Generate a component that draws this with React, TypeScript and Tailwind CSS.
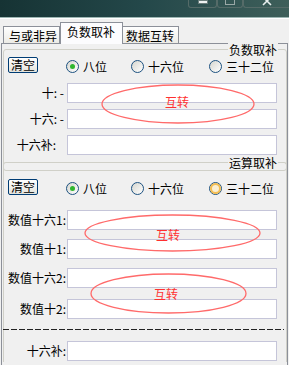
import clsx from "clsx";

const FONT = "font-['SimSun','Noto_Sans_CJK_SC',sans-serif]";

function Radio({ label, checked, hover, w }: { label: string; checked?: boolean; hover?: boolean; w?: string }) {
  return (
    <div className={clsx("flex items-center gap-[4px]", w)}>
      <span className="w-[13px] h-[13px] shrink-0 rounded-full border border-[#1c5180] bg-gradient-to-br from-[#d6d6cf] to-white flex items-center justify-center">
        {checked && <span className="w-[5px] h-[5px] rounded-full bg-[#2fb62f]" />}
        {hover && <span className="w-[11px] h-[11px] rounded-full border-2 border-[#f3bd52] bg-[#fbefd2]" />}
      </span>
      <span>{label}</span>
    </div>
  );
}

function ClearButton() {
  return (
    <button className="w-[30px] h-[16px] rounded-[2px] border border-[#003c74] bg-gradient-to-b from-white to-[#e3e3dc] text-[12px] leading-[14px] text-black">
      清空
    </button>
  );
}

function Field({ label, labelW, pr, gap }: { label: string; labelW: string; pr?: string; gap: string }) {
  return (
    <div className="flex items-center h-[20px]">
      <span className={clsx("text-right whitespace-nowrap", labelW, pr)}>{label}</span>
      <span className={clsx("h-[20px] w-[210px] bg-white border border-[#c5c5d9]", gap)} />
    </div>
  );
}

function Swap({ cx, cy, rx, ry, tx, ty }: { cx: number; cy: number; rx: number; ry: number; tx: number; ty: number }) {
  return (
    <>
      <svg className="absolute left-0 top-0 pointer-events-none" width={289} height={365}>
        <ellipse cx={cx} cy={cy} rx={rx} ry={ry} fill="none" stroke="#ff6a6a" strokeWidth={1.3} />
      </svg>
      <span
        className="absolute text-[12px] leading-[12px] text-[#ff3030] -translate-x-1/2 -translate-y-1/2"
        style={{ left: tx, top: ty }}
      >
        互转
      </span>
    </>
  );
}

export default function App() {
  return (
    <div className={clsx("relative w-[289px] h-[365px] overflow-hidden bg-[#f0f0f0] text-[12px] leading-[14px] text-black", FONT)}>
      {/* window frame */}
      <div className="h-[18px] border-b border-[#9cb6b3] bg-gradient-to-r from-[#163334] via-[#24484a] to-[#3e5f5a] flex justify-end">
        <div className="flex h-[8px]">
          <div className="w-[29px] border border-t-0 border-[#556b68] rounded-b-[3px] flex justify-center">
            <span className="w-[10px] h-[4px] bg-[#eef2f2] border border-[#6a7d7b]" />
          </div>
          <div className="w-[26px] border border-t-0 border-[#556b68] rounded-b-[3px] flex justify-center">
            <span className="w-[10px] h-[5px] border border-t-0 border-[#9aa8a6]" />
          </div>
          <div className="w-[46px] border border-t-0 border-r-0 border-[#556b68] rounded-bl-[3px] flex justify-center">
            <svg width="10" height="6" viewBox="0 0 10 6">
              <path d="M1 -3 L9 5 M9 -3 L1 5" stroke="#e8eeee" strokeWidth="1.6" />
            </svg>
          </div>
        </div>
      </div>
      <div className="h-[4px] border-t border-white" />

      {/* tabs */}
      <div className="flex items-end h-[21px] pl-[3px]">
        <div className="w-[57px] h-[17px] border border-b-0 border-[#8c9099] bg-gradient-to-b from-white to-[#ecebe6] pl-[5px] pt-[2px]">与或非异</div>
        <div className="relative w-[63px] h-[22px] -mb-[1px] border border-b-0 border-[#8c9099] bg-[#fcfcfe] pl-[6px] pt-[2px] z-10">负数取补</div>
        <div className="w-[56px] h-[17px] border border-b-0 border-l-0 border-[#8c9099] bg-gradient-to-b from-white to-[#ecebe6] pl-[3px] pt-[2px]">数据互转</div>
      </div>

      {/* tab page */}
      <div className="ml-[1px] w-[287px] h-[330px] border border-b-0 border-[#8c9099] pt-[5px]">
        {/* group 1 */}
        <div className="relative ml-[1px] w-[284px] border border-[#d0d0c8] rounded-[3px] pt-[7px] pb-[15px] pl-[4px]">
          <span className="absolute right-[8px] -top-[7px] px-[1px] bg-[#f0f0f0]">负数取补</span>
          <div className="flex items-center h-[16px]">
            <ClearButton />
            <div className="flex items-center ml-[28px] mt-[3px]">
              <Radio label="八位" checked w="w-[65px]" />
              <Radio label="十六位" w="w-[78px]" />
              <Radio label="三十二位" />
            </div>
          </div>
          <div className="flex flex-col gap-[6px] mt-[10px] -ml-[4px]">
            <Field label="十: -" labelW="w-[60px]" gap="ml-[3px]" />
            <Field label="十六: -" labelW="w-[60px]" gap="ml-[3px]" />
            <Field label="十六补:" labelW="w-[60px]" pr="pr-[8px]" gap="ml-[3px]" />
          </div>
        </div>

        {/* group 2 */}
        <div className="relative ml-[1px] w-[284px] -mt-[9px] border border-b-0 border-[#d0d0c8] rounded-t-[3px] pt-[16px] pl-[4px] h-[200px]">
          <span className="absolute right-[8px] -top-[7px] px-[1px] bg-[#f0f0f0]">运算取补</span>
          <div className="flex items-center h-[16px]">
            <ClearButton />
            <div className="flex items-center ml-[28px] mt-[3px]">
              <Radio label="八位" checked w="w-[65px]" />
              <Radio label="十六位" w="w-[78px]" />
              <Radio label="三十二位" hover />
            </div>
          </div>
          <div className="flex flex-col -ml-[4px]">
            <div className="mt-[15px]"><Field label="数值十六1:" labelW="w-[62px]" gap="ml-[1px]" /></div>
            <div className="mt-[9px]"><Field label="数值十1:" labelW="w-[62px]" gap="ml-[1px]" /></div>
            <div className="mt-[9px]"><Field label="数值十六2:" labelW="w-[62px]" gap="ml-[1px]" /></div>
            <div className="mt-[11px]"><Field label="数值十2:" labelW="w-[62px]" gap="ml-[1px]" /></div>
            <div className="mt-[10px] h-[1px] w-[281px] bg-[repeating-linear-gradient(90deg,#222_0,#222_6px,transparent_6px,transparent_8px)] -ml-[1px]" />
            <div className="mt-[11px]"><Field label="十六补:" labelW="w-[62px]" gap="ml-[1px]" /></div>
          </div>
        </div>
      </div>

      <Swap cx={178} cy={104} rx={76} ry={19} tx={177} ty={102} />
      <Swap cx={172.5} cy={233} rx={87.5} ry={18} tx={168} ty={235} />
      <Swap cx={168.5} cy={293.5} rx={77.5} ry={19.5} tx={166} ty={294} />
    </div>
  );
}
